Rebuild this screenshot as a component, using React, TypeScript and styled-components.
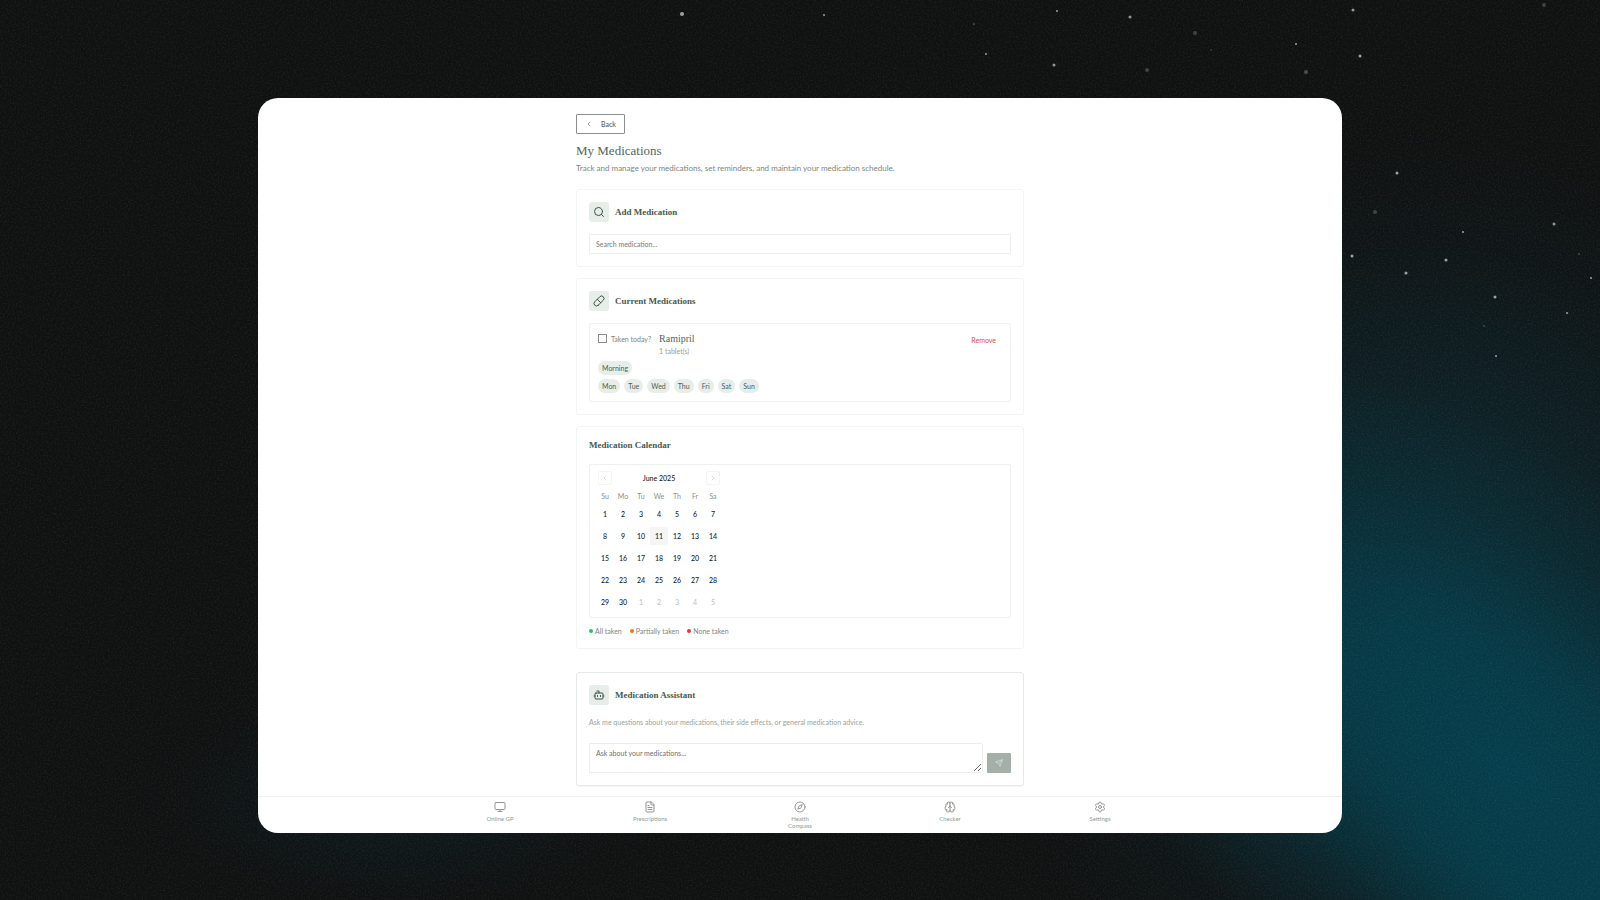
import React from "react";
import styled, { createGlobalStyle } from "styled-components";
import {
  Bot,
  Brain,
  ChevronLeft,
  ChevronRight,
  Compass,
  FileText,
  Monitor,
  Pill,
  Search,
  Send,
  Settings,
} from "lucide-react";

const sans = `Lato, "Liberation Sans", sans-serif`;
const serif = `"Liberation Serif", "DejaVu Serif", serif`;

const GlobalStyle = createGlobalStyle`
  *, *::before, *::after { box-sizing: border-box; }
  body { margin: 0; background: #0f1010; }
  button, input, textarea { font: inherit; }
  h1, h2, h3, p, ul { margin: 0; padding: 0; }
  ul { list-style: none; }
`;

const Page = styled.div`
  position: relative;
  display: flex;
  flex-direction: column;
  align-items: center;
  min-height: 100vh;
  padding: 98px 24px 67px;
  overflow: hidden;
  font-family: ${sans};
  background: #0f1010;
`;

const Sky = styled.svg`
  position: absolute;
  inset: 0;
  width: 100%;
  height: 100%;
`;

const Panel = styled.div`
  position: relative;
  display: flex;
  flex-direction: column;
  width: 100%;
  max-width: 1084px;
  background: #fff;
  border-radius: 20px;
  overflow: hidden;
`;

const Content = styled.main`
  display: flex;
  flex-direction: column;
  width: 100%;
  max-width: 448px;
  margin: 0 auto;
  padding: 16px 0 10px;
`;

const BackButton = styled.button`
  display: flex;
  align-items: center;
  align-self: flex-start;
  gap: 8px;
  height: 20px;
  padding: 0 8px;
  background: #fff;
  border: 1px solid #8c8f8d;
  border-radius: 1px;
  color: #5b655f;
  font-size: 7px;
  font-weight: 500;
  line-height: 10px;
`;

const PageTitle = styled.h1`
  margin-top: 9px;
  color: #56645b;
  font-family: ${serif};
  font-size: 13px;
  font-weight: 400;
  line-height: 16px;
`;

const Subtitle = styled.p`
  margin-top: 4px;
  color: #7b857f;
  font-size: 8px;
  line-height: 11px;
`;

const Stack = styled.div`
  display: flex;
  flex-direction: column;
  gap: 11px;
  margin-top: 15px;
`;

const Card = styled.section<{ $raised?: boolean }>`
  padding: 12px;
  background: #fff;
  border: 1px solid ${(p) => (p.$raised ? "#e6e9e7" : "#f3f5f4")};
  border-radius: 3px;
  margin-top: ${(p) => (p.$raised ? "12px" : "0")};
  box-shadow: ${(p) => (p.$raised ? "0 1px 1px rgba(0, 0, 0, 0.05)" : "none")};
`;

const CardHead = styled.header`
  display: flex;
  align-items: center;
  gap: 6px;
  margin-bottom: 12px;
`;

const IconTile = styled.span`
  display: grid;
  place-items: center;
  width: 20px;
  height: 20px;
  background: #e7ede9;
  border-radius: 3px;
  color: #3d5245;
`;

const CardTitle = styled.h2`
  color: #47594e;
  font-family: ${serif};
  font-size: 9px;
  font-weight: 700;
  line-height: 13px;
`;

const SearchInput = styled.input`
  display: block;
  width: 100%;
  height: 20px;
  padding: 0 6px;
  background: #fff;
  border: 1px solid #eceeed;
  border-radius: 1px;
  outline: none;
  font-size: 7px;
  &::placeholder {
    color: #757876;
    opacity: 1;
  }
`;

const InnerBox = styled.div`
  padding: 8px;
  border: 1px solid #eff1f0;
  border-radius: 2px;
`;

const MedRow = styled.div`
  display: flex;
  align-items: flex-start;
  gap: 8px;
`;

const TakenLabel = styled.label`
  display: flex;
  align-items: center;
  gap: 4px;
  height: 13px;
  color: #7b857f;
  font-size: 7px;
`;

const CheckBox = styled.input`
  appearance: none;
  width: 9px;
  height: 9px;
  margin: 0;
  background: #fff;
  border: 1px solid #8c8f8d;
`;

const MedInfo = styled.div`
  flex: 1;
`;

const MedName = styled.h3`
  color: #56645b;
  font-family: ${serif};
  font-size: 10px;
  font-weight: 400;
  line-height: 14px;
`;

const MedDose = styled.p`
  color: #959e99;
  font-size: 7px;
  line-height: 11px;
`;

const RemoveButton = styled.button`
  height: 16px;
  padding: 0 6px;
  background: none;
  border: 0;
  color: #dc4a50;
  font-size: 7px;
  line-height: 16px;
`;

const Pills = styled.ul`
  display: flex;
  flex-wrap: wrap;
  gap: 4px;
  margin-top: 4px;
`;

const PillItem = styled.li`
  height: 14px;
  padding: 0 4px;
  background: #e7ede9;
  border-radius: 7px;
  color: #4b5e53;
  font-size: 7px;
  line-height: 14px;
`;

const CalendarBox = styled.div`
  padding: 6px;
  border: 1px solid #eff1f0;
  border-radius: 2px;
`;

const MonthBar = styled.div`
  display: flex;
  align-items: center;
  justify-content: space-between;
  width: 126px;
  padding: 0 2px;
`;

const MonthName = styled.span`
  color: #222;
  font-size: 7px;
  font-weight: 500;
  line-height: 14px;
`;

const MonthButton = styled.button`
  display: grid;
  place-items: center;
  width: 14px;
  height: 14px;
  padding: 0;
  background: #fff;
  border: 1px solid #f3f4f3;
  border-radius: 2px;
  color: #c3c6c4;
`;

const MonthTable = styled.table`
  margin-top: 5px;
  border-collapse: collapse;
  font-size: 7px;
`;

const WeekDay = styled.th`
  width: 18px;
  height: 15px;
  padding: 0;
  color: #8b8f8d;
  font-weight: 400;
  line-height: 12px;
  vertical-align: top;
`;

const DayCell = styled.td`
  padding: 0;
  tr:not(:first-child) > & {
    padding-top: 4px;
  }
`;

const DayButton = styled.button<{ $today: boolean; $outside: boolean }>`
  display: block;
  width: 18px;
  height: 18px;
  padding: 0;
  background: ${(p) => (p.$today ? "#f4f5f4" : "transparent")};
  border: 0;
  border-radius: 1px;
  color: ${(p) => (p.$outside ? "#bbbebc" : "#222")};
  font-size: 7px;
  font-weight: ${(p) => (p.$outside ? 400 : 500)};
  line-height: 18px;
`;

const Legend = styled.ul`
  display: flex;
  gap: 8px;
  margin-top: 8px;
`;

const LegendItem = styled.li<{ $color: string }>`
  display: flex;
  align-items: center;
  gap: 2px;
  color: #7b857f;
  font-size: 7px;
  line-height: 10px;
  &::before {
    content: "";
    width: 4px;
    height: 4px;
    background: ${(p) => p.$color};
    border-radius: 50%;
  }
`;

const AssistantText = styled.p`
  color: #98a19c;
  font-size: 7px;
  line-height: 10px;
`;

const AskRow = styled.form`
  display: flex;
  align-items: flex-end;
  gap: 4px;
  margin-top: 16px;
`;

const AskBox = styled.textarea`
  flex: 1;
  min-width: 0;
  height: 30px;
  padding: 4px 6px;
  background: #fff;
  border: 1px solid #eceeed;
  border-radius: 1px;
  outline: none;
  font-size: 7px;
  line-height: 10px;
  &::placeholder {
    color: #6c706e;
    opacity: 1;
  }
`;

const SendButton = styled.button`
  display: grid;
  place-items: center;
  width: 24px;
  height: 20px;
  padding: 0;
  background: #a4afa8;
  border: 0;
  border-radius: 1px;
  color: #dde3df;
`;

const NavBar = styled.nav`
  border-top: 1px solid #f0f1f0;
  padding: 4px 0;
`;

const NavList = styled.ul`
  display: grid;
  grid-template-columns: repeat(5, 1fr);
  max-width: 750px;
  margin: 0 auto;
`;

const NavLink = styled.a`
  display: flex;
  flex-direction: column;
  align-items: center;
  gap: 2px;
  color: #93958f;
  text-decoration: none;
`;

const NavLabel = styled.span`
  max-width: 40px;
  min-height: 14px;
  color: #8f9a94;
  font-size: 6px;
  line-height: 7px;
  text-align: center;
`;

type Star = [x: number, y: number, r: number, opacity: number];

const stars: Star[] = [
  [682, 14, 2, 0.6], [824, 15, 1, 0.6], [1057, 11, 1, 0.6], [1130, 17, 1.5, 0.55],
  [1353, 10, 1.5, 0.55], [1544, 5, 2, 0.2], [974, 24, 1, 0.25], [1195, 33, 2, 0.2],
  [986, 54, 1, 0.6], [1054, 65, 1.5, 0.55], [1147, 70, 2, 0.2], [1296, 44, 1, 0.6],
  [1211, 50, 1, 0.15], [1360, 56, 1.5, 0.6], [1306, 72, 2, 0.25], [1397, 173, 1.5, 0.6],
  [1375, 212, 2, 0.2], [1554, 224, 1.5, 0.55], [1463, 232, 1, 0.6], [1352, 256, 1.5, 0.6],
  [1446, 260, 1.5, 0.6], [1406, 273, 1.5, 0.6], [1495, 297, 1.5, 0.6], [1579, 254, 1, 0.2],
  [1591, 278, 1, 0.6], [1567, 313, 1, 0.6], [1484, 326, 1, 0.2], [1496, 356, 1, 0.6],
];

const weekDays = ["Su", "Mo", "Tu", "We", "Th", "Fr", "Sa"];
const doseDays = ["Mon", "Tue", "Wed", "Thu", "Fri", "Sat", "Sun"];

const weeks = Array.from({ length: 5 }, (_, w) =>
  Array.from({ length: 7 }, (_, d) => {
    const n = w * 7 + d + 1;
    return { day: n > 30 ? n - 30 : n, outside: n > 30, today: n === 11 };
  })
);

const navItems = [
  { label: "Online GP", Icon: Monitor },
  { label: "Prescriptions", Icon: FileText },
  { label: "Health Compass", Icon: Compass },
  { label: "Checker", Icon: Brain },
  { label: "Settings", Icon: Settings },
];

export default function App() {
  return (
    <>
      <GlobalStyle />
      <Page>
        <Sky viewBox="0 0 1600 900" preserveAspectRatio="xMidYMid slice" aria-hidden="true">
          <defs>
            <radialGradient id="halo">
              <stop offset="0" stopColor="#0a3540" stopOpacity="0.8" />
              <stop offset="0.4" stopColor="#0a3540" stopOpacity="0.55" />
              <stop offset="0.75" stopColor="#0a3540" stopOpacity="0.15" />
              <stop offset="1" stopColor="#0a3540" stopOpacity="0" />
            </radialGradient>
            <radialGradient id="band">
              <stop offset="0" stopColor="#043e4c" />
              <stop offset="0.35" stopColor="#043e4c" stopOpacity="0.8" />
              <stop offset="0.7" stopColor="#043e4c" stopOpacity="0.25" />
              <stop offset="1" stopColor="#043e4c" stopOpacity="0" />
            </radialGradient>
            <filter id="grain" x="0" y="0" width="100%" height="100%">
              <feTurbulence type="fractalNoise" baseFrequency="0.6" numOctaves="2" seed="4" />
              <feColorMatrix values="0 0 0 0 1  0 0 0 0 1  0 0 0 0 1  0.5 0 0 0 -0.2" />
            </filter>
          </defs>
          <ellipse cx="1420" cy="600" rx="480" ry="480" fill="url(#halo)" opacity="0.8" />
          <ellipse rx="560" ry="290" fill="url(#band)" transform="translate(1510 770) rotate(38)" />
          <ellipse cx="1620" cy="900" rx="260" ry="220" fill="url(#band)" opacity="0.7" />
          <ellipse cx="400" cy="800" rx="280" ry="120" fill="url(#halo)" opacity="0.3" />
          <rect width="1600" height="900" filter="url(#grain)" opacity="0.25" />
          {stars.map(([x, y, r, opacity]) => (
            <circle key={`${x}-${y}`} cx={x} cy={y} r={r} fill="#fff" opacity={opacity} />
          ))}
        </Sky>
        <Panel>
          <Content>
            <BackButton type="button">
              <ChevronLeft size={8} strokeWidth={2} />
              Back
            </BackButton>
            <PageTitle>My Medications</PageTitle>
            <Subtitle>
              Track and manage your medications, set reminders, and maintain your medication schedule.
            </Subtitle>

            <Stack>
              <Card>
                <CardHead>
                  <IconTile><Search size={12} /></IconTile>
                  <CardTitle>Add Medication</CardTitle>
                </CardHead>
                <SearchInput type="text" aria-label="Search medication" placeholder="Search medication..." />
              </Card>

              <Card>
                <CardHead>
                  <IconTile><Pill size={12} /></IconTile>
                  <CardTitle>Current Medications</CardTitle>
                </CardHead>
                <InnerBox>
                  <MedRow>
                    <TakenLabel htmlFor="taken">
                      <CheckBox id="taken" type="checkbox" />
                      Taken today?
                    </TakenLabel>
                    <MedInfo>
                      <MedName>Ramipril</MedName>
                      <MedDose>1 tablet(s)</MedDose>
                    </MedInfo>
                    <RemoveButton type="button">Remove</RemoveButton>
                  </MedRow>
                  <Pills>
                    <PillItem>Morning</PillItem>
                  </Pills>
                  <Pills>
                    {doseDays.map((d) => (
                      <PillItem key={d}>{d}</PillItem>
                    ))}
                  </Pills>
                </InnerBox>
              </Card>

              <Card>
                <CardHead>
                  <CardTitle>Medication Calendar</CardTitle>
                </CardHead>
                <CalendarBox>
                  <MonthBar>
                    <MonthButton type="button" aria-label="Previous month">
                      <ChevronLeft size={8} />
                    </MonthButton>
                    <MonthName>June 2025</MonthName>
                    <MonthButton type="button" aria-label="Next month">
                      <ChevronRight size={8} />
                    </MonthButton>
                  </MonthBar>
                  <MonthTable>
                    <thead>
                      <tr>
                        {weekDays.map((d) => (
                          <WeekDay key={d} scope="col">{d}</WeekDay>
                        ))}
                      </tr>
                    </thead>
                    <tbody>
                      {weeks.map((week, i) => (
                        <tr key={i}>
                          {week.map((c) => (
                            <DayCell key={c.day}>
                              <DayButton type="button" $today={c.today} $outside={c.outside}>
                                {c.day}
                              </DayButton>
                            </DayCell>
                          ))}
                        </tr>
                      ))}
                    </tbody>
                  </MonthTable>
                </CalendarBox>
                <Legend>
                  <LegendItem $color="#22c55e">All taken</LegendItem>
                  <LegendItem $color="#f97316">Partially taken</LegendItem>
                  <LegendItem $color="#e5383b">None taken</LegendItem>
                </Legend>
              </Card>

              <Card $raised>
                <CardHead>
                  <IconTile><Bot size={12} /></IconTile>
                  <CardTitle>Medication Assistant</CardTitle>
                </CardHead>
                <AssistantText>
                  Ask me questions about your medications, their side effects, or general medication advice.
                </AssistantText>
                <AskRow>
                  <AskBox aria-label="Ask about your medications" placeholder="Ask about your medications..." />
                  <SendButton type="button" aria-label="Send">
                    <Send size={8} />
                  </SendButton>
                </AskRow>
              </Card>
            </Stack>
          </Content>
          <NavBar aria-label="Main">
            <NavList>
              {navItems.map(({ label, Icon }) => (
                <li key={label}>
                  <NavLink href="#">
                    <Icon size={12} strokeWidth={2} />
                    <NavLabel>{label}</NavLabel>
                  </NavLink>
                </li>
              ))}
            </NavList>
          </NavBar>
        </Panel>
      </Page>
    </>
  );
}
